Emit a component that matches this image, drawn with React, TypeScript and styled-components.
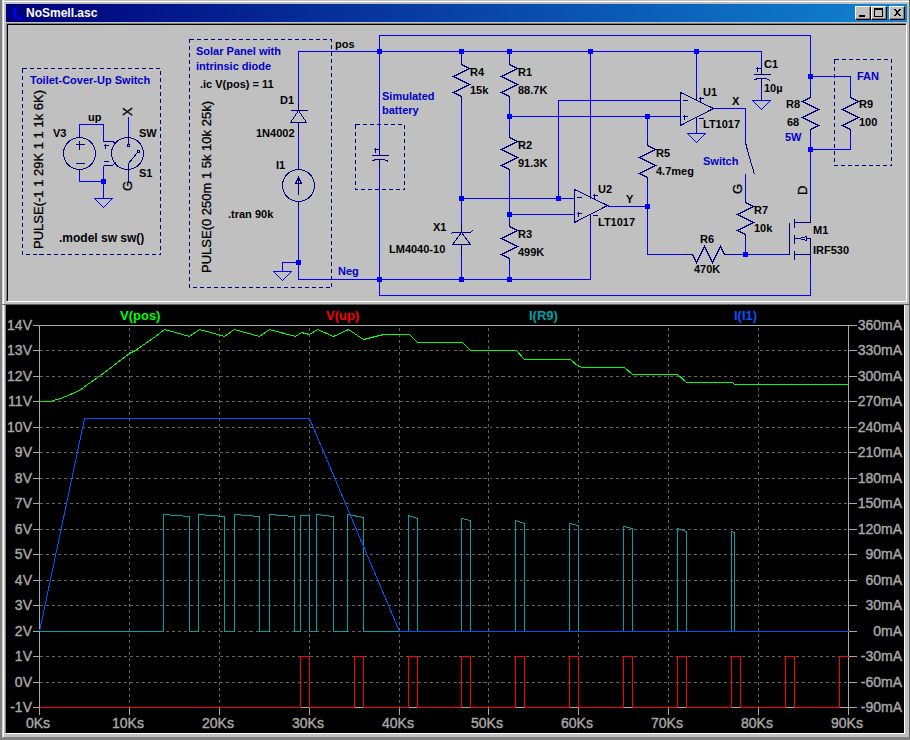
import React from "react";
import styled, { createGlobalStyle } from "styled-components";

const GlobalStyle = createGlobalStyle`
  body {
    margin: 0;
    background: #808080;
    font-family: "Liberation Sans", Arial, sans-serif;
  }
`;

const Desktop = styled.main`
  display: flex;
  flex-direction: column;
  padding-left: 2px;
`;

const WindowFrame = styled.section`
  display: flex;
  flex-direction: column;
  gap: 1px;
  padding: 4px 2px 2px 3px;
  background: #c0c0c0;
  border-left: 1px solid #d4d4d4;
  border-right: 1px solid #606060;
  border-bottom: 1px solid #606060;
  box-shadow: inset 1px 0 #fff, inset 0 1px #c0c0c0, inset 0 2px #fff;
`;

const TitleBar = styled.header`
  display: flex;
  align-items: center;
  height: 18px;
  padding: 0 2px;
  background: linear-gradient(90deg, #00007b, #1084d0);
`;

const Title = styled.h1`
  flex: 1;
  margin: 0 0 0 2px;
  color: #fff;
  font-size: 12px;
  line-height: 18px;
`;

const Controls = styled.div`
  display: flex;
`;

const ControlButton = styled.button<{ $apart?: boolean }>`
  display: flex;
  align-items: center;
  justify-content: center;
  width: 16px;
  height: 14px;
  margin-left: ${(p) => (p.$apart ? 2 : 0)}px;
  padding: 0;
  background: #c0c0c0;
  border: 1px solid;
  border-color: #fff #000 #000 #fff;
  box-shadow: inset -1px -1px #808080;
`;

const SunkenClient = styled.div`
  border: 1px solid;
  border-color: #808080 #fff #fff #808080;
  box-shadow: inset 1px 1px #000;
  padding: 1px 0 0 1px;
`;

const PlotFrame = styled.section`
  padding: 0 4px 3px 2px;
  background: #c0c0c0;
  border-left: 1px solid #d4d4d4;
  border-right: 1px solid #606060;
  border-bottom: 1px solid #808080;
  box-shadow: inset 1px 0 #fff, 0 1px #000;
`;

const PlotClient = styled.div`
  border: 1px solid;
  border-color: #000 #fff #fff #808080;
  border-top: 0;
`;

const Drawing = styled.svg`
  display: block;
  width: 100%;
  height: auto;
  font-family: "Liberation Sans", Arial, sans-serif;
`;

const Wire = styled.path`
  fill: none;
  stroke: #0000ff;
  shape-rendering: crispEdges;
`;

const Part = styled.path`
  fill: none;
  stroke: #000080;
  shape-rendering: crispEdges;
`;

const Ring = styled.circle`
  fill: none;
  stroke: #000080;
  shape-rendering: crispEdges;
`;

const Box = styled.rect`
  fill: none;
  stroke: #000080;
  stroke-dasharray: 4 3;
  shape-rendering: crispEdges;
`;

const Label = styled.text<{ $note?: boolean; $size?: number }>`
  fill: ${(p) => (p.$note ? "#0000c8" : "#000")};
  font-size: ${(p) => p.$size ?? 11}px;
  font-weight: bold;
`;

const Upright = styled.text`
  fill: #000;
  stroke: #000;
  stroke-width: 0.3px;
  font-size: 13px;
`;

const AxisLabel = styled.text`
  fill: #a8a8a8;
  stroke: #a8a8a8;
  stroke-width: 0.4px;
  font-size: 14px;
`;

const TraceName = styled.text`
  font-size: 13px;
  font-weight: bold;
`;

const Grid = styled.path`
  fill: none;
  stroke: #646464;
  stroke-dasharray: 3 3;
  shape-rendering: crispEdges;
`;

const Axis = styled.path`
  fill: none;
  stroke: #a8a8a8;
  shape-rendering: crispEdges;
`;

const Trace = styled.path`
  fill: none;
  shape-rendering: crispEdges;
`;

const resistor = (x: number, y: number, dir = 1) =>
  `M${x} ${y - 5}V${y}L${x + 8 * dir} ${y + 4}L${x - 8 * dir} ${y + 12}L${x + 8 * dir} ${y + 20}L${x - 8 * dir} ${y + 28}L${x} ${y + 32}V${y + 37}`;
const ground = (x: number, y: number) => `M${x - 9} ${y}H${x + 9}L${x} ${y + 9}Z`;
const plus = (x: number, y: number, r = 2) => `M${x - r} ${y}H${x + r + 1}M${x} ${y - r}V${y + r + 1}`;
const opAmp = (x: number, y: number) =>
  `M${x} ${y}V${y + 33}L${x + 33} ${y + 16}ZM${x + 2} ${y + 8}H${x + 7}${plus(x + 4, y + 24)}${plus(x + 20, y + 6)}M${x + 18} ${y + 26}H${x + 23}`;
const capacitor = (x: number, y: number) =>
  `M${x} ${y - 8}V${y}M${x - 8} ${y}H${x + 9}M${x - 8} ${y + 6}Q${x - 6} ${y + 4} ${x} ${y + 4}T${x + 9} ${y + 6}M${x} ${y + 4}V${y + 12}${plus(x - 4, y - 6)}`;

const parts = [
  resistor(461, 64), resistor(509, 64), resistor(509, 137), resistor(509, 226),
  resistor(647, 145), resistor(745, 202), resistor(810, 97, -1), resistor(850, 97),
  "M682 254H692L696 262L704 246L712 262L720 246L724 254H729",
  opAmp(574, 189), opAmp(680, 92),
  "M590 190V198M590 214V222M696 93V100M696 117V124",
  capacitor(379, 155), capacitor(761, 74),
  "M298 102V110M290 110H307M298 110L290 122H306L298 110M298 122V132",
  "M298 165V169M298 201V205M298 177V194M298 177L295 183H301Z",
  "M461 222V232M450 234L452 232H470L472 230M461 232L452 244H470L461 232M461 244V254",
  "M745 142L747 150L754 174",
  "M785 254H789V222M794 218V227M794 234V243M794 250V259M794 222H810V215M810 238V260M794 254H810M794 238H799L806 236V240L799 238M806 238H810",
  plus(79, 144, 4), "M75 163H84M79 133V137M79 169V173",
  plus(105, 145), "M103 161H108M103 141H112L116 143M103 165H112L115 162",
  "M128 135V144M137 152L128 163V173",
];

const wires = [
  "M298 102V51H761V66", "M298 132V165", "M298 205V279H590V222", "M298 262H282V271",
  "M379 147V35H810V92", "M379 167V295H810V260",
  "M461 51V59M461 101V222M461 254V279", "M509 51V59M509 101V132M509 174V221M509 263V279",
  "M509 116H680", "M558 198V100H680", "M461 198H574", "M509 214H574", "M590 51V190",
  "M607 206H647V254H682", "M647 116V140M647 182V206", "M696 51V93M696 124V133",
  "M712 108H745V142", "M745 173V197M745 239V254M729 254H785",
  "M810 76H850V92M850 134V149H810M810 134V215", "M761 86V100",
  "M79 133V124H103V141M103 165V198M79 173V181H103", "M128 116V135M128 173V182",
  ground(103, 198), ground(282, 271), ground(696, 133), ground(761, 100),
];

const nodes = [
  [103, 181], [298, 262], [379, 51], [379, 279], [461, 51], [509, 51], [590, 51], [696, 51],
  [509, 116], [647, 116], [461, 198], [558, 198], [509, 214], [647, 206], [461, 279],
  [509, 279], [745, 254], [810, 76], [810, 149],
];

const labels: [number, number, string][] = [
  [53, 137, "V3"], [88, 121, "up"], [139, 137, "SW"], [139, 177, "S1"],
  [200, 88, ".ic V(pos) = 11"], [280, 104, "D1"], [256, 137, "1N4002"], [276, 169, "I1"],
  [228, 218, ".tran 90k"], [335, 48, "pos"], [470, 76, "R4"], [470, 94, "15k"],
  [518, 76, "R1"], [518, 94, "88.7K"], [518, 149, "R2"], [518, 167, "91.3K"],
  [518, 238, "R3"], [518, 256, "499K"], [433, 231, "X1"], [389, 253, "LM4040-10"],
  [598, 193, "U2"], [598, 226, "LT1017"], [626, 203, "Y"], [656, 157, "R5"],
  [656, 175, "4.7meg"], [703, 96, "U1"], [703, 128, "LT1017"], [732, 105, "X"],
  [764, 68, "C1"], [764, 92, "10µ"], [786, 108, "R8"], [787, 126, "68"],
  [859, 108, "R9"], [859, 126, "100"], [754, 214, "R7"], [754, 232, "10k"],
  [700, 243, "R6"], [694, 273, "470K"], [813, 234, "M1"], [813, 254, "IRF530"],
];

const notes: [number, number, string][] = [
  [30, 84, "Toilet-Cover-Up Switch"], [196, 55, "Solar Panel with"], [196, 70, "intrinsic diode"],
  [382, 100, "Simulated"], [382, 114, "battery"], [338, 275, "Neg"], [703, 165, "Switch"],
  [785, 141, "5W"], [857, 80, "FAN"],
];

const uprights: [number, number, string][] = [
  [43, 249, "PULSE(-1 1 29K 1 1 1k 6K)"], [211, 273, "PULSE(0 250m 1 5k 10k 25k)"],
  [132, 116, "X"], [132, 191, "G"], [742, 194, "G"], [807, 195, "D"],
];

function Schematic() {
  return (
    <Drawing viewBox="8 25 898 276" role="img" aria-label="Circuit schematic">
      <g transform="translate(0.5 0.5)">
        <Box x={22} y={68} width={138} height={186} />
        <Box x={189} y={39} width={142} height={248} />
        <Box x={355} y={124} width={49} height={65} />
        <Box x={834} y={59} width={57} height={106} />
        <Wire d={wires.join("")} />
        <Part d={parts.join("")} />
        <Ring cx={79} cy={153} r={16} />
        <Ring cx={127} cy={153} r={16} />
        <Ring cx={298} cy={185} r={16} />
        <Ring cx={128} cy={145} r={1} />
        <Ring cx={138} cy={151} r={1} />
      </g>
      {nodes.map(([x, y]) => (
        <rect key={`${x}-${y}`} x={x - 2} y={y - 2} width={5} height={5} fill="#0000ff" />
      ))}
      {labels.map(([x, y, t]) => (
        <Label key={`${x}-${y}`} x={x} y={y}>{t}</Label>
      ))}
      <Label x={59} y={242} $size={12}>.model sw sw()</Label>
      {notes.map(([x, y, t]) => (
        <Label key={t} x={x} y={y} $note>{t}</Label>
      ))}
      {uprights.map(([x, y, t]) => (
        <Upright key={`${x}-${y}`} transform={`translate(${x} ${y}) rotate(-90)`}>{t}</Upright>
      ))}
    </Drawing>
  );
}

const gridX = [39, 129, 219, 309, 399, 488, 578, 668, 758, 848];
const gridY = [325, 350, 376, 401, 427, 452, 478, 503, 529, 554, 580, 605, 631, 656, 682, 707];

const fanPulses = [
  [163, 189, 514, 516], [198, 224, 514, 516], [234, 259, 514, 516], [269, 294, 514, 516],
  [300, 309, 515, 515], [316, 333, 514, 516], [347, 363, 514, 517], [408, 417, 515, 518],
  [461, 470, 518, 520], [515, 524, 520, 523], [569, 578, 523, 525], [623, 632, 526, 528],
  [677, 686, 528, 531], [731, 734, 531, 532],
];
const switchPulses = [
  [300, 309], [354, 363], [408, 417], [461, 470], [515, 524], [569, 578],
  [623, 632], [677, 686], [731, 740], [785, 794], [839, 848],
];

const fanTrace =
  "M39 631" + fanPulses.map(([a, b, top, end]) => `H${a}V${top}L${b} ${end}V631`).join("") + "H848";
const switchTrace =
  "M39 707" + switchPulses.map(([a, b]) => `H${a}V656H${b}${b < 848 ? "V707" : ""}`).join("");
const posTrace =
  "M39 401L50 401L53 400L60 398L70 394L79 390L87 384L100 375L129 353L135 350L155 336L164 329L175 332L189 336L199 329L210 332L224 336L234 329L259 336L269 329L295 336L301 332L309 334L317 329L333 336L348 329L363 339L383 334H409L417 342H462L470 350H516L524 359H570L578 366L583 367H624L632 374H677L686 382H732L734 384H848";

function Plot() {
  return (
    <Drawing viewBox="6 305 898 428" role="img" aria-label="Waveform plot">
      <rect x={6} y={305} width={898} height={428} fill="#000" />
      <g transform="translate(0.5 0.5)">
        <Grid d={gridX.slice(1, -1).map((x) => `M${x} 327V707`).join("")} />
        <Grid d={gridY.slice(1, -1).map((y) => `M39 ${y}H848`).join("")} />
        <Axis
          d={
            "M39 325V714M848 325V714M32 325H856M32 707H856" +
            gridX.map((x) => `M${x} 707V714`).join("") +
            gridY.map((y) => `M32 ${y}H39M848 ${y}H856`).join("")
          }
        />
        <Trace d={posTrace} stroke="#00ff00" />
        <Trace d={switchTrace} stroke="#ff0000" />
        <Trace d={fanTrace} stroke="#00a0a8" />
        <Trace d="M39 631L84 418H309L399 631H848" stroke="#0054ff" />
      </g>
      {gridY.map((y, i) => (
        <React.Fragment key={y}>
          <AxisLabel x={32} y={y + 5} textAnchor="end">{14 - i}V</AxisLabel>
          <AxisLabel x={902} y={y + 5} textAnchor="end">{360 - 30 * i}mA</AxisLabel>
        </React.Fragment>
      ))}
      {gridX.map((x, i) => (
        <AxisLabel key={x} x={x - 1} y={728} textAnchor="middle">{i === 0 ? "0Ks" : `${i}0Ks`}</AxisLabel>
      ))}
      <TraceName x={120} y={320} fill="#00ff00">V(pos)</TraceName>
      <TraceName x={326} y={320} fill="#ff0000">V(up)</TraceName>
      <TraceName x={529} y={320} fill="#00a0a8">I(R9)</TraceName>
      <TraceName x={734} y={320} fill="#0054ff">I(I1)</TraceName>
    </Drawing>
  );
}

export default function App() {
  return (
    <>
      <GlobalStyle />
      <Desktop>
        <WindowFrame>
          <TitleBar>
            <svg width="16" height="16" viewBox="0 0 16 16" fill="none" stroke="#0000ff" aria-hidden="true">
              <path d="M2 8H7M11 1L7 5M7 10L12 14" />
              <path d="M7 3V13" strokeWidth="2" />
              <path d="M13 15H9L13 11Z" fill="#0000ff" stroke="none" />
            </svg>
            <Title>NoSmell.asc</Title>
            <Controls>
              <ControlButton type="button" aria-label="Minimize">
                <svg width="12" height="10" shapeRendering="crispEdges"><path d="M2 7H8V9H2Z" /></svg>
              </ControlButton>
              <ControlButton type="button" aria-label="Maximize">
                <svg width="12" height="10" shapeRendering="crispEdges"><path fillRule="evenodd" d="M1 0H10V9H1ZM2 2V8H9V2Z" /></svg>
              </ControlButton>
              <ControlButton type="button" aria-label="Close" $apart>
                <svg width="12" height="10" shapeRendering="crispEdges"><path d="M2 1H4L6 3L8 1H10L7 4V5L10 8H8L6 6L4 8H2L5 5V4Z" /></svg>
              </ControlButton>
            </Controls>
          </TitleBar>
          <SunkenClient>
            <Schematic />
          </SunkenClient>
        </WindowFrame>
        <PlotFrame>
          <PlotClient>
            <Plot />
          </PlotClient>
        </PlotFrame>
      </Desktop>
    </>
  );
}
